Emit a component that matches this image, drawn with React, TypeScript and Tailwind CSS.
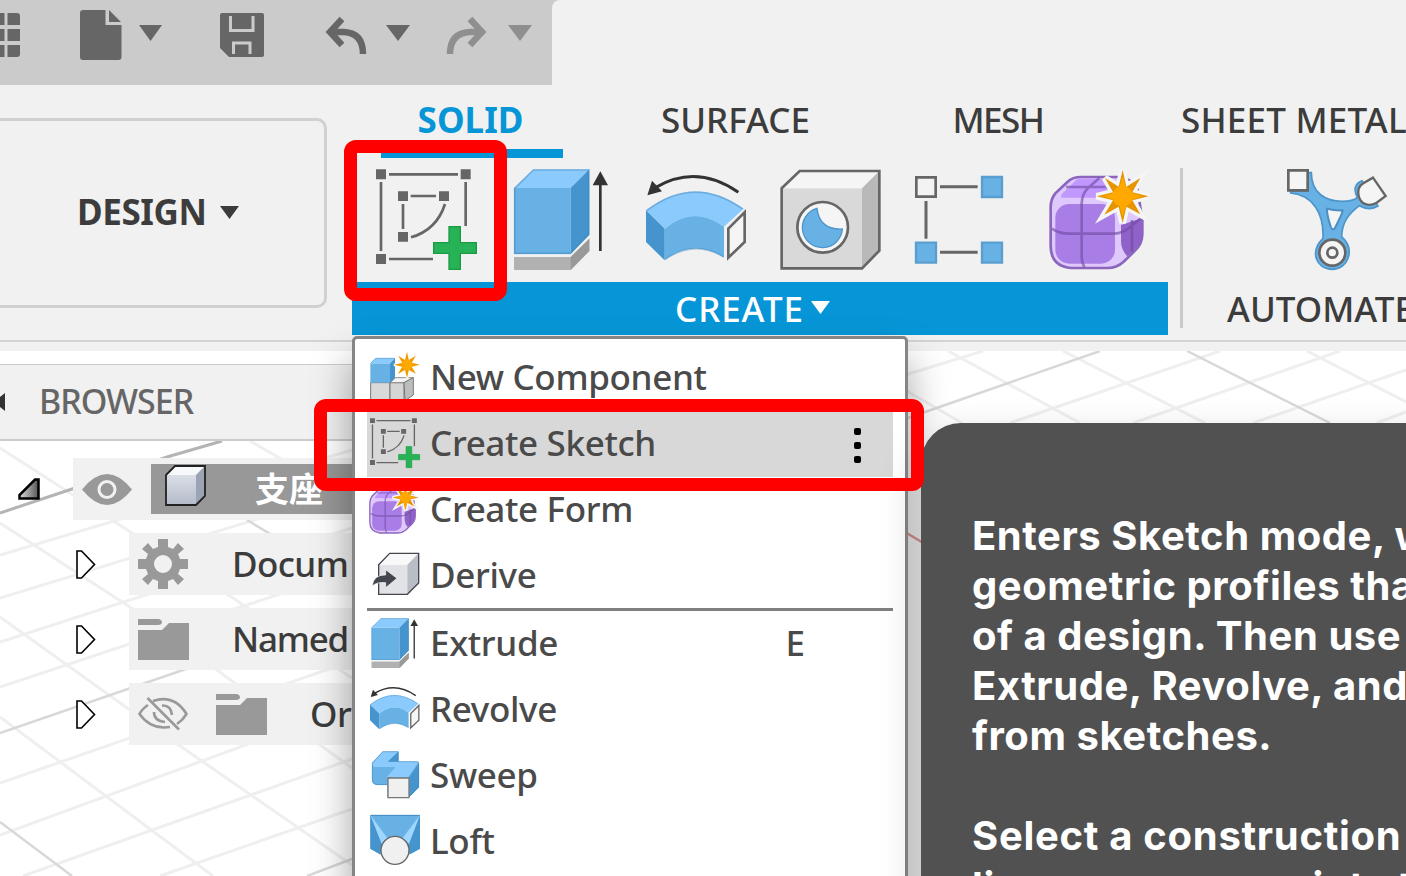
import React from "react";

type IconProps = { size: number };

const Plus = () => (
  <path d="M327 410h34v48h48v32h-48v48h-34v-48h-46v-32h46z" fill="#27b355" stroke="#1c9b46" strokeWidth="4" />
);

function SketchIcon({ size }: IconProps) {
  return (
    <svg width={size} height={size} viewBox="108 237 303 303" className="shrink-0 overflow-visible">
      <g stroke="#666" strokeWidth="8" fill="none">
        <path d="M147 253H354M123 276V483M147 507H279M377 276V408M212 318H288M189 342V417" />
        <path d="M315 342Q290 420 213 442" />
      </g>
      <g fill="#666">
        <path d="M108 238h30v30h-30zM362 238h30v30h-30zM108 492h30v30h-30zM174 304h30v29h-30zM297 304h30v29h-30zM174 426h30v29h-30z" />
      </g>
      <Plus />
    </svg>
  );
}

function ExtrudeIcon({ size }: IconProps) {
  return (
    <svg width={size} height={size} viewBox="513 237 303 303" className="shrink-0 overflow-visible">
      <path d="M522 501H692L748 446V483L692 540H522z" fill="#b1b1b1" />
      <path d="M692 501L748 446V483L692 540z" fill="#999" />
      <path d="M522 294H692V492H522z" fill="#67b1e5" />
      <path d="M522 294L580 238H748L692 294z" fill="#8bcafc" />
      <path d="M692 294L748 238V434L692 492z" fill="#4694cd" />
      <path d="M524 295L580 240H746V433L691 490H524z" fill="none" stroke="#3a7fb5" strokeOpacity=".4" strokeWidth="5" />
      <path d="M781 483V275" stroke="#333" strokeWidth="8" />
      <path d="M781 244L804 286H758z" fill="#333" />
    </svg>
  );
}

function RevolveIcon({ size }: IconProps) {
  return (
    <svg width={size} height={size} viewBox="48 57 303 303" className="shrink-0 overflow-visible">
      <path d="M104 236Q192 162 282 230V323Q192 265 104 330z" fill="#67b1e5" />
      <path d="M48 181Q192 70 341 176L282 230Q192 165 104 236z" fill="#8bcafc" />
      <path d="M48 181L104 236V331L48 276z" fill="#4694cd" />
      <path d="M50 182Q192 73 338 177M106 328Q192 268 280 320" fill="none" stroke="#3a7fb5" strokeOpacity=".4" strokeWidth="5" />
      <path d="M295 236L344 187V276L295 323z" fill="#f5f5f5" stroke="#666" strokeWidth="8" />
      <path d="M76 113Q200 40 325 127" fill="none" stroke="#333" strokeWidth="9" />
      <path d="M52 136L66 92L96 124z" fill="#333" />
    </svg>
  );
}

function HoleIcon({ size }: IconProps) {
  return (
    <svg width={size} height={size} viewBox="453 57 303 303" className="shrink-0 overflow-visible">
      <path d="M455 115H696V355H455z" fill="#d9d9d9" />
      <path d="M455 115L510 63H748L696 115z" fill="#f5f5f5" />
      <path d="M696 115L748 63V302L696 355z" fill="#b9b9b9" />
      <path d="M455 115L509 63H748V302L696 355H455z" fill="none" stroke="#666" strokeWidth="8" />
      <circle cx="578" cy="232" r="76" fill="#f5f5f5" stroke="#666" strokeWidth="8" />
      <path d="M561 175A60 60 0 1 0 637 237Q568 240 561 175z" fill="#67b1e5" stroke="#4b95cb" strokeWidth="4" />
    </svg>
  );
}

function PatternIcon({ size }: IconProps) {
  return (
    <svg width={size} height={size} viewBox="48 57 303 303" className="shrink-0 overflow-visible">
      <path d="M120 110H233M78 153V266M120 307H233" stroke="#666" strokeWidth="9" />
      <path d="M49 82h58v58H49z" fill="#f3f3f3" stroke="#666" strokeWidth="8" />
      <path d="M246 81h60v60h-60zM48 278h60v60H48zM246 278h60v60h-60z" fill="#67b1e5" stroke="#5a9ed0" strokeWidth="7" />
    </svg>
  );
}

const STAR = "M670 60L681 110L723 84L699 127L748 139L699 151L723 193L681 170L670 219L658 170L615 194L641 151L592 139L641 127L617 84L658 110z";

function FormIcon({ size }: IconProps) {
  return (
    <svg width={size} height={size} viewBox="455 57 303 303" className="shrink-0 overflow-visible">
      <path d="M545 81H655Q700 84 715 120L729 210V252Q729 283 705 304L672 336Q652 354 625 354H515Q454 348 454 288V170Q454 148 468 130L505 95Q520 81 545 81z" fill="#dfc8fb" stroke="#8c66bd" strokeWidth="8" />
      <path d="M540 86H640V143H487Q482 140 490 130L522 98Q530 88 540 86z" fill="#c198ff" />
      <rect x="468" y="162" width="179" height="179" rx="42" fill="#a97de6" />
      <path d="M665 225L729 204V252Q727 280 705 301L684 319Q666 300 665 275z" fill="#8e62c8" />
      <path d="M458 236Q478 251 510 251H640Q668 251 690 233L724 205M556 351Q547 340 547 318V160Q548 130 567 113L600 84M500 111H625M698 210V305" fill="none" stroke="#6f4aa0" strokeOpacity=".62" strokeWidth="8" />
      <path d={STAR} fill="#f5f5f5" stroke="#f5f5f5" strokeWidth="20" />
      <path d={STAR} fill="#e69500" />
      <circle cx="670" cy="139" r="31" fill="#ffa900" />
      <path d="M670 80L682 120H658zM670 199L658 160H682zM612 139L650 127V151zM728 139L690 127V151z" fill="#ffa900" />
    </svg>
  );
}

function AutomateIcon({ size }: IconProps) {
  return (
    <svg width={size} height={size} viewBox="386 237 303 303" className="shrink-0 overflow-visible">
      <path d="M456 248C456 310 500 334 548 334C575 334 588 328 594 322C582 300 586 280 608 272L656 348C640 358 620 358 600 347C570 370 548 395 547 440C590 480 565 538 519 538C470 538 450 485 491 445C494 370 462 316 394 309V302H446V248z" fill="#67b1e5" stroke="#4b95cb" strokeWidth="5" />
      <path d="M503 356Q526 362 550 361Q551 366 527 414Q520 422 515 412Q502 375 503 356z" fill="#f5f5f5" stroke="#4b8fc4" strokeWidth="6" />
      <path d="M387 241h58v60h-58z" fill="#f5f5f5" stroke="#666" strokeWidth="8" />
      <path d="M641 263L679 318L652 338C628 352 604 343 598 318C594 300 600 287 612 280z" fill="#f5f5f5" stroke="#666" strokeWidth="7" />
      <circle cx="519" cy="488" r="39" fill="#f5f5f5" stroke="#666" strokeWidth="8" />
      <circle cx="519" cy="488" r="15" fill="none" stroke="#666" strokeWidth="8" />
    </svg>
  );
}

function NewComponentIcon({ size }: IconProps) {
  return (
    <svg width={size} height={size} viewBox="60 64 150 150" className="shrink-0 overflow-visible">
      <path d="M62 156H120V212H62z" fill="#d9d9d9" stroke="#777" strokeWidth="3" />
      <path d="M120 156H162V210H120z" fill="#d5d5d5" stroke="#777" strokeWidth="3" />
      <path d="M120 156L137 141H190L162 156z" fill="#f4f4f4" stroke="#777" strokeWidth="2.5" />
      <path d="M162 156L190 141V193L165 210z" fill="#bdbdbd" stroke="#777" strokeWidth="3" />
      <path d="M61 98H120V156H61z" fill="#67b1e5" />
      <path d="M61 98L77 83H135L120 98z" fill="#8bcafc" />
      <path d="M120 98L135 83V141L120 156z" fill="#4694cd" />
      <path d="M62 98L77 83H135" fill="none" stroke="#4b95cb" strokeWidth="2" />
      <g transform="translate(-164 33) scale(.5)">
        <path d={STAR} fill="#fff" stroke="#fff" strokeWidth="14" />
        <path d={STAR} fill="#f09c00" />
        <circle cx="670" cy="139" r="32" fill="#ffa900" />
      </g>
    </svg>
  );
}

function DeriveIcon({ size }: IconProps) {
  return (
    <svg width={size} height={size} viewBox="60 657 150 150" className="shrink-0 overflow-visible">
      <path d="M86 701H172V790H86z" fill="#e0e2e6" />
      <path d="M86 701L119 667H206L172 701z" fill="#f8f8f8" />
      <path d="M172 701L206 667V756L172 790z" fill="#b9bec6" />
      <path d="M86 701L119 667H206V756L172 790H86z" fill="none" stroke="#43474d" strokeWidth="4" />
      <path d="M66 765Q72 730 107 732V716L141 742L107 770V755Q82 752 66 765z" fill="#43474d" stroke="#fff" strokeWidth="2" />
    </svg>
  );
}

function SweepIcon({ size }: IconProps) {
  return (
    <svg width={size} height={size} viewBox="60 447 150 150" className="shrink-0 overflow-visible">
      <path d="M66 485L98 452H145V482H206V559L178 588H112V552H80Q66 550 66 536z" fill="#67b1e5" />
      <path d="M66 488L98 452H145L113 482H206L174 529H110L136 498H76Q66 496 66 488z" fill="#8bcafc" />
      <path d="M113 482L145 452V482zM178 529L207 486V559L178 588z" fill="#4694cd" />
      <path d="M67 487L98 452H145V482H200Q206 483 206 490V558L178 587M67 487V538Q70 551 84 551H112" fill="none" stroke="#4389be" strokeOpacity=".6" strokeWidth="3" />
      <path d="M114 531h63v59h-63z" fill="#f0f0f0" stroke="#777" strokeWidth="4" />
    </svg>
  );
}

function LoftIcon({ size }: IconProps) {
  return (
    <svg width={size} height={size} viewBox="60 648 150 150" className="shrink-0 overflow-visible">
      <path d="M61 645H210V746L176 764H92L61 746z" fill="#67b1e5" />
      <path d="M61 645L104 720L90 763L61 746zM210 645L168 720L180 763L210 746z" fill="#4694cd" />
      <path d="M61 645L95 732L112 714zM210 645L177 732L158 714z" fill="#9ed6ff" />
      <path d="M62 646H209" stroke="#4389be" strokeWidth="3" />
      <circle cx="135" cy="751" r="42" fill="#f0f0f0" stroke="#666" strokeWidth="4" />
    </svg>
  );
}

const Caret = ({ className }: { className: string }) => (
  <svg viewBox="0 0 22 16" preserveAspectRatio="none" className={className}>
    <path d="M0 0H22L11 16z" fill="currentColor" />
  </svg>
);

function QuickAccessBar() {
  return (
    <div className="flex h-[85px] shrink-0 bg-[#cbcbcb]">
      <div className="flex w-[552px] shrink-0 text-[#666]">
        <svg width="20" height="44" viewBox="0 0 20 44" className="mt-[13px] shrink-0" fill="currentColor">
          <path d="M0 0H4.500V12H0zM7.500 0H17Q20 0 20 3V12H7.500zM0 16H4.500V28H0zM7.500 16H20V28H7.500zM0 32H4.500V44H0zM7.500 32H20V41Q20 44 17 44H7.500z" />
        </svg>
        <svg width="42" height="50" viewBox="0 0 42 50" className="mt-[10px] ml-[60px] shrink-0" fill="currentColor">
          <path d="M3 0H25.500V15H41.500V47Q41.500 50 38.500 50H3Q0 50 0 47V3Q0 0 3 0z" />
          <path d="M29 0L41 12H29z" />
        </svg>
        <Caret className="mt-[25px] ml-[17px] h-[16px] w-[23px] shrink-0" />
        <svg width="44" height="44" viewBox="0 0 44 44" className="mt-[13px] ml-[58px] shrink-0" fill="none">
          <path d="M2 0H42Q44 0 44 2V42Q44 44 42 44H9L0 35V2Q0 0 2 0z" fill="currentColor" />
          <path d="M10.500 3V17.500H33V3M13.500 41V30H30V41" stroke="#cbcbcb" strokeWidth="3" />
        </svg>
        <svg width="42" height="40" viewBox="0 0 42 40" className="mt-[15px] ml-[61px] shrink-0" fill="none" stroke="currentColor" strokeWidth="6.500">
          <path d="M17 4L5 17L17 30M5 17H19Q38 18 38 39" />
        </svg>
        <Caret className="mt-[25px] ml-[19px] h-[16px] w-[24px] shrink-0" />
        <svg width="41" height="40" viewBox="0 0 41 40" className="mt-[15px] ml-[36px] shrink-0 text-[#8f8f8f]" fill="none" stroke="currentColor" strokeWidth="6.500">
          <path d="M24 4L36 17L24 30M36 17H24Q4 18 4 39" />
        </svg>
        <Caret className="mt-[25px] ml-[21px] h-[16px] w-[24px] shrink-0 text-[#8f8f8f]" />
      </div>
      <div className="grow rounded-tl-[8px] bg-[#f1f1f1]" />
    </div>
  );
}

function Ribbon() {
  return (
    <div className="flex h-[257px] shrink-0 border-b-2 border-[#d3d3d3] bg-[#f1f1f1]">
      <button className="mt-[33px] flex h-[190px] w-[327px] shrink-0 items-center rounded-r-[10px] border-3 border-l-0 border-[#d0d0d0] pb-[1px] pl-[77px] text-[35px] font-bold">
        <span className="tracking-[-0.4px]">DESIGN</span>
        <Caret className="ml-[13px] h-[13px] w-[19px]" />
      </button>
      <div className="ml-[25px] flex flex-col font-medium">
        <nav className="ml-[29px] flex h-[73px] text-[35px]">
          <div className="flex w-[182px] items-center justify-center border-b-9 border-[#0696d7] pt-[6px] pr-[3px] font-bold text-[#0696d7]">SOLID</div>
          <div className="flex w-[345px] items-center justify-center pb-[3px]">SURFACE</div>
          <div className="flex w-[180px] items-center justify-center pb-[3px] tracking-[-1.500px]">MESH</div>
          <div className="flex items-center pb-[3px] pl-[93px] tracking-[0.200px] whitespace-nowrap">SHEET METAL</div>
        </nav>
        <div className="flex">
          <section className="w-[816px] shrink-0 pt-[11px]">
            <div className="flex gap-[34px] pl-[24px]">
              <SketchIcon size={101} />
              <ExtrudeIcon size={101} />
              <RevolveIcon size={101} />
              <HoleIcon size={101} />
              <PatternIcon size={101} />
              <FormIcon size={101} />
            </div>
            <div className="mt-[12px] flex h-[53px] items-center bg-[#0696d7] pl-[323px] text-[35px] text-white">
              <span className="pt-px tracking-[0.900px]">CREATE</span>
              <Caret className="mb-[3px] ml-[7px] h-[13px] w-[19px]" />
            </div>
          </section>
          <div className="mt-[10px] ml-[12px] h-[160px] w-[3px] shrink-0 bg-[#c9c9c9]" />
          <section className="ml-[44px] pt-[11px]">
            <div className="pl-[61px]">
              <AutomateIcon size={101} />
            </div>
            <div className="mt-[12px] flex h-[53px] items-center pt-px text-[35px]">AUTOMATE</div>
          </section>
        </div>
      </div>
    </div>
  );
}

function GridFloor() {
  return (
    <svg width="1406" height="525" viewBox="0 351 1406 525" className="absolute inset-0" fill="none">
      <g stroke="#efefef" strokeWidth="3">
        <path d="M0 555L352 450M0 598L352 490M0 642L352 528M0 687L352 570M0 783L352 661M0 835L352 706M23 876L352 759M160 876L352 809" />
        <path d="M0 448L233 598L352 678M0 523L130 607L352 768M0 617L183 748L352 865M0 717L213 876M250 441L352 500" />
        <path d="M948 351L1080 423M1063 351L1205 423M1307 351L1406 402M905 390L962 423" />
        <path d="M905 375L983 351M1010 423L1220 351M1133 423L1340 351M1253 423L1406 370M1377 423L1406 412" />
      </g>
      <g stroke="#d8d8d8" strokeWidth="2.500">
        <path d="M0 733L183 670L352 612M307 876L352 859M247 520L352 583M0 822L72 876M905 419L1100 351M1187 351L1330 423" />
      </g>
      <path d="M0 513L72 489L167 457L222 441" stroke="#b4b4b4" strokeWidth="3" />
      <path d="M905 532L925 544" stroke="#e39a9a" strokeWidth="2.500" />
    </svg>
  );
}

const Expander = () => (
  <svg width="20" height="29" viewBox="0 0 20 29" className="ml-[76px] shrink-0" fill="#fff" stroke="#000" strokeWidth="1.600">
    <path d="M1 1H5.500L18.500 14.500L5.500 28H1z" />
  </svg>
);

const Folder = ({ className }: { className: string }) => (
  <svg width="51" height="41" viewBox="0 0 51 41" className={className} fill="#999">
    <path d="M0 0H21Q24 1 24 3Q24 6 20 6H0zM0 11H24L31 4H51V41H0z" />
  </svg>
);

const Gear = () => (
  <svg width="50" height="50" viewBox="-25 -25 50 50" className="ml-[9px] shrink-0" fill="#999">
    <path fillRule="evenodd" d="M-5 -25H5V-17L10 -15L15 -21L21 -15L15 -10L17 -5H25V5H17L15 10L21 15L15 21L10 15L5 17V25H-5V17L-10 15L-15 21L-21 15L-15 10L-17 5H-25V-5H-17L-15 -10L-21 -15L-15 -21L-10 -15L-5 -17zM9 0A9 9 0 1 0 -9 0A9 9 0 1 0 9 0z" />
  </svg>
);

function BrowserPanel() {
  return (
    <aside className="relative flex w-[352px] shrink-0 flex-col pt-[13px] text-[35px] font-medium">
      <div className="flex h-[77px] items-center border-t border-b-2 border-t-[#ccc] border-b-[#ccc] bg-[#f1f1f1] pb-px text-[#666]">
        <svg width="5" height="18" viewBox="0 0 5 18">
          <path d="M5 0V18L0 14V4z" fill="#333" />
        </svg>
        <span className="ml-[34px] text-[34px] tracking-[-1px]">BROWSER</span>
      </div>
      <div className="mt-[17px] flex h-[62px] items-center">
        <svg width="22" height="22" viewBox="0 0 22 22" className="ml-[18px] shrink-0">
          <defs>
            <linearGradient id="open" x1="0" x2="1">
              <stop stopColor="#ddd" />
              <stop offset="1" stopColor="#555" />
            </linearGradient>
          </defs>
          <path d="M1.500 20.500V17L17 1.500H20.500V20.500z" fill="url(#open)" stroke="#000" strokeWidth="2.500" />
        </svg>
        <div className="ml-[33px] flex h-[62px] grow items-center bg-[#f1f1f1]">
          <svg width="50" height="31" viewBox="0 0 50 31" className="ml-[9px] shrink-0">
            <path d="M0 15.500Q25 -15.500 50 15.500Q25 46.500 0 15.500z" fill="#999" />
            <circle cx="25" cy="15.500" r="8" fill="none" stroke="#f1f1f1" strokeWidth="3" />
          </svg>
          <div className="ml-[19px] flex h-[50px] grow items-center bg-[#989898]">
            <svg width="41" height="42" viewBox="0 0 41 42" className="mb-[6px] ml-[14px] shrink-0">
              <defs>
                <linearGradient id="cube" x1="0" x2="0" y1="0" y2="1">
                  <stop stopColor="#e6eaf0" />
                  <stop offset="1" stopColor="#b4bac8" />
                </linearGradient>
              </defs>
              <path d="M1 10L10 1H40V31L31 40H1z" fill="url(#cube)" />
              <path d="M1 10L10 1H40L31 10z" fill="#f7f8f9" />
              <path d="M31 10L40 1V31L31 40z" fill="#9aa4b4" />
              <path d="M1 10L10 1H40V31L31 40H1z" fill="none" stroke="#222" strokeWidth="1.800" />
            </svg>
            <span className="ml-[49px] text-[34px] leading-[50px] font-bold whitespace-nowrap text-white">支座一</span>
          </div>
        </div>
      </div>
      <div className="mt-[13px] flex h-[62px] items-center">
        <Expander />
        <div className="ml-[33px] flex h-[62px] grow items-center bg-[#f1f1f1]">
          <Gear />
          <span className="ml-[44px] pt-px tracking-[-0.600px]">Docum</span>
        </div>
      </div>
      <div className="mt-[13px] flex h-[62px] items-center">
        <Expander />
        <div className="ml-[33px] flex h-[62px] grow items-center bg-[#f1f1f1]">
          <Folder className="ml-[9px] shrink-0" />
          <span className="ml-[43px] pt-px tracking-[-1.200px]">Named</span>
        </div>
      </div>
      <div className="mt-[13px] flex h-[62px] items-center">
        <Expander />
        <div className="ml-[33px] flex h-[62px] grow items-center bg-[#f1f1f1]">
          <svg width="50" height="34" viewBox="0 0 50 34" className="ml-[9px] shrink-0" fill="none" stroke="#999" strokeWidth="2.600">
            <path d="M10 8Q4 12 1.500 17Q13 33 32 30M15 4Q36 -3 48.500 17Q45 23 39 27M9.500 1L41 32.500M16 15Q16 24 27 25M24 8.500Q33 8 34 18" />
          </svg>
          <Folder className="ml-[28px] shrink-0" />
          <span className="ml-[43px] pt-px tracking-[-0.500px]">Or</span>
        </div>
      </div>
    </aside>
  );
}

type MenuRow = { label: string; icon: React.ReactNode; shortcut?: string; active?: boolean };

const topRows: MenuRow[] = [
  { label: "New Component", icon: <NewComponentIcon size={50} /> },
  { label: "Create Sketch", icon: <SketchIcon size={50} />, active: true },
  { label: "Create Form", icon: <FormIcon size={50} /> },
  { label: "Derive", icon: <DeriveIcon size={50} /> },
];

const bottomRows: MenuRow[] = [
  { label: "Extrude", icon: <ExtrudeIcon size={50} />, shortcut: "E" },
  { label: "Revolve", icon: <RevolveIcon size={50} /> },
  { label: "Sweep", icon: <SweepIcon size={50} /> },
  { label: "Loft", icon: <LoftIcon size={50} /> },
];

function MenuItem({ label, icon, shortcut, active }: MenuRow) {
  return (
    <li className={`flex h-[66px] shrink-0 items-center pb-[3px] pl-[3px] ${active ? "bg-[#d8d8d8]" : ""}`}>
      {icon}
      <span className="ml-[10px] grow pt-[2px] tracking-[-0.350px]">{label}</span>
      {shortcut && <span className="mr-[88px] pt-[2px]">{shortcut}</span>}
      {active && (
        <span className="mt-[5px] mr-[32px] flex flex-col gap-[7px]">
          <i className="size-[7px] rounded-[2px] bg-black" />
          <i className="size-[7px] rounded-[2px] bg-black" />
          <i className="size-[7px] rounded-[2px] bg-black" />
        </span>
      )}
    </li>
  );
}

function CreateMenu() {
  return (
    <ul className="absolute top-[336px] left-[352px] flex h-[580px] w-[556px] flex-col rounded-[5px] border-3 border-[#858585] bg-white px-[12px] pt-[6px] text-[35px] font-medium text-[#4a4a4a] shadow-[0_24px_40px_rgba(0,0,0,0.36)]">
      {topRows.map((r) => (
        <MenuItem key={r.label} {...r} />
      ))}
      <li className="-mt-px h-[3px] shrink-0 bg-[#808080]" />
      {bottomRows.map((r) => (
        <MenuItem key={r.label} {...r} />
      ))}
    </ul>
  );
}

function Tooltip() {
  return (
    <div className="absolute top-[423px] left-[921px] h-[520px] w-[600px] rounded-tl-[40px] bg-[#515151] pt-[88px] pl-[51px] font-['Inter',sans-serif] text-[40px] leading-[50.100px] font-bold tracking-[0.550px] whitespace-nowrap text-white shadow-[0_16px_40px_rgba(0,0,0,0.22)]">
      <p>Enters Sketch mode, where</p>
      <p>geometric profiles that</p>
      <p>of a design. Then use</p>
      <p>Extrude, Revolve, and</p>
      <p>from sketches.</p>
      <p className="mt-[50px] tracking-[0.700px]">Select a construction</p>
      <p>lines, or some points to</p>
    </div>
  );
}

export default function App() {
  return (
    <div className="relative flex h-[876px] w-[1406px] flex-col overflow-hidden bg-[#f1f1f1] font-['Noto_Sans','Noto_Sans_CJK_SC',sans-serif] text-[#3c3c3c]">
      <QuickAccessBar />
      <Ribbon />
      <main className="relative mt-[9px] flex h-[525px] shrink-0 bg-white">
        <GridFloor />
        <BrowserPanel />
      </main>
      <CreateMenu />
      <Tooltip />
      <div className="absolute top-[140px] left-[344px] h-[161px] w-[163px] rounded-[12px] border-[13.500px] border-[#ff0000]" />
      <div className="absolute top-[399px] left-[314px] h-[92px] w-[610px] rounded-[12px] border-[13.500px] border-[#ff0000]" />
    </div>
  );
}
